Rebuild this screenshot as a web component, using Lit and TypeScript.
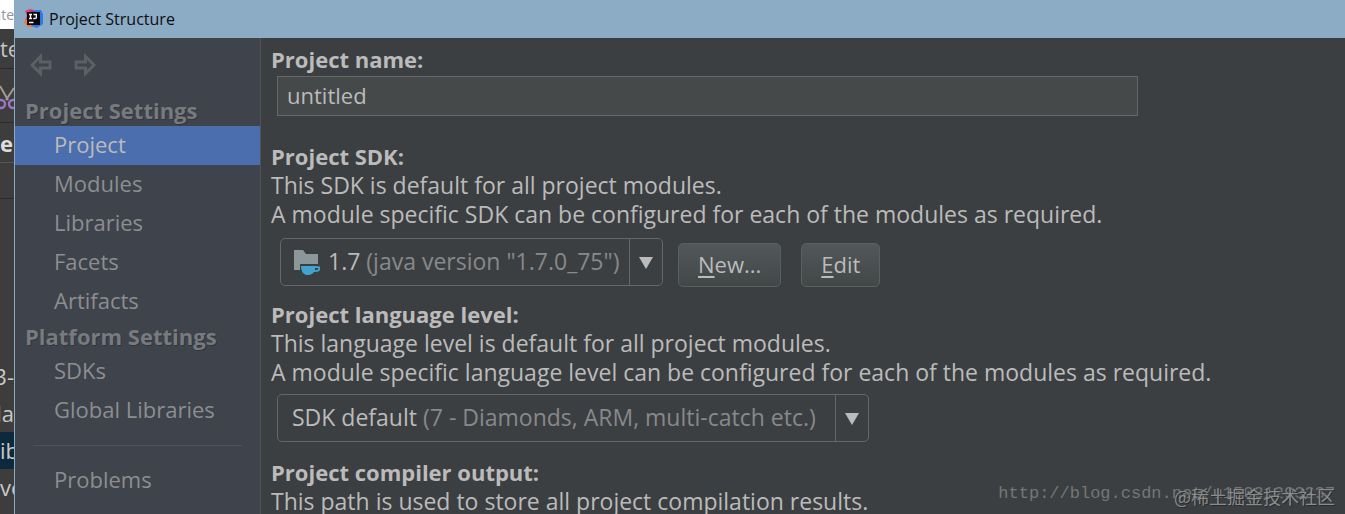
import { LitElement, html, css, svg } from "lit";
import { customElement, property } from "lit/decorators.js";

const ideaLogo = svg`
  <svg class="logo" viewBox="0 0 20 20" aria-hidden="true">
    <path fill="#e8386d" d="M1 2 6 0 12 2 10 9 1 11 3 7Z" />
    <path fill="#f0783c" d="M1 11 0 14 4 18 8 18 8 10Z" />
    <path fill="#8a3fa8" d="M7 1 12 2 12 6 5 6Z" />
    <path fill="#2a7be8" d="M11 1 17 1 19 5 19 15 13 19 7 17 12 12Z" />
    <rect x="3" y="3" width="13" height="13" fill="#0a0708" />
    <path fill="none" stroke="#f4f4f4" stroke-width="1.4" d="M5 5.5H8M6.500 5.500V9.500M5 9.500H8M9.500 5.500H12.300V8.400Q12.300 9.500 11 9.500H9.300M5 13.500H9.500" />
  </svg>`;

const arrowBack = svg`
  <svg class="arrow" viewBox="0 0 24 24" aria-hidden="true">
    <path d="M3 12 11.500 3.500V9H21V15H11.500V20.500Z" />
  </svg>`;

const arrowForward = svg`
  <svg class="arrow" viewBox="0 0 24 24" aria-hidden="true">
    <path d="M21 12 12.500 3.500V9H3V15H12.500V20.500Z" />
  </svg>`;

const jdkIcon = svg`
  <svg class="jdk" viewBox="0 0 28 28" aria-hidden="true">
    <path fill="#8b9799" d="M1 3H10L13 7H25V17H7V23H1Z" />
    <path fill="#3fa5cf" fill-rule="evenodd" d="M8 19H22.500L27 19.500V23Q26 25 21 25Q19 28 16 28H13Q8 26 8 19ZM22 21V23.300Q24.500 23.300 25.200 22V21Z" />
  </svg>`;

@customElement("setting-combo")
class SettingCombo extends LitElement {
  @property() value = "";
  @property() hint = "";
  @property() label = "";
  @property({ type: Boolean }) jdk = false;

  static styles = css`
    :host { display: inline-grid; box-sizing: border-box; grid-template-columns: 1fr 33px; height: 48px; border: 1px solid #646668; border-radius: 5px; color: #bbbbbb; }
    .control { grid-area: 1 / 1 / 2 / 3; width: 100%; height: 100%; margin: 0; padding: 0 0 2px 14px; appearance: none; border: 0; border-radius: 4px; background: transparent; color: inherit; font: inherit; }
    .control.with-icon { padding-left: 47px; }
    .control option { background: #3c3f41; }
    .face { grid-area: 1 / 1; display: flex; align-items: center; padding: 0 0 2px 14px; pointer-events: none; white-space: pre; }
    .face.with-icon { padding-left: 12px; }
    .spacer { visibility: hidden; }
    .hint { color: #88898a; }
    .drop { grid-area: 1 / 2; display: grid; place-items: center; border-left: 1px solid #646668; pointer-events: none; padding-top: 2px; }
    .triangle { width: 14px; height: 12px; fill: #bbbbbb; }
    .jdk { width: 28px; height: 28px; margin-right: 7px; }
  `;

  render() {
    const icon = this.jdk ? "with-icon" : "";
    return html`
      <select class="control ${icon}" aria-label=${this.label}>
        <option>${this.value}</option>
      </select>
      <span class="face ${icon}" aria-hidden="true">${this.jdk ? jdkIcon : ""}<span class="spacer">${this.value} </span><span class="hint">${this.hint}</span></span>
      <span class="drop" aria-hidden="true">
        <svg class="triangle" viewBox="0 0 14 12"><path d="M0 0H14L7 12Z" /></svg>
      </span>`;
  }
}

@customElement("app-root")
class AppRoot extends LitElement {
  static styles = css`
    :host { display: block; height: 100vh; overflow: hidden; background: #3c3f41; color: #bbbbbb; font: 22px/29px "Open Sans", "Noto Sans", sans-serif; }
    .desktop { display: grid; grid-template-columns: 14px 1fr; height: 100%; }
    .behind { overflow: hidden; display: flex; flex-direction: column; white-space: nowrap; background: #3e3d3d; }
    .b-title { flex: none; height: 29px; background: #ffffff; color: #949494; font-size: 14px; }
    .b-menu { flex: none; height: 39px; border-bottom: 1px solid #2b2b2b; color: #c4c4c4; line-height: 38px; }
    .b-tool { flex: none; height: 53px; border-bottom: 1px solid #2b2b2b; }
    .b-tab { flex: none; height: 39px; border-bottom: 1px solid #555555; color: #dddddd; font-weight: 700; line-height: 40px; }
    .b-bar { flex: none; height: 35px; border-bottom: 1px solid #2b2b2b; }
    .b-gap { flex: none; height: 159px; }
    .b-row { flex: none; height: 37px; line-height: 37px; color: #c8c8c8; }
    .b-row.picked { background: #0d293e; }
    .cut { display: flex; justify-content: flex-end; }
    .scissors { display: block; width: 14px; height: 52px; }

    .window { display: flex; flex-direction: column; min-width: 0; border-left: 1px solid #8cabc2; }
    .titlebar { flex: none; display: flex; align-items: center; gap: 5px; height: 38px; padding-left: 9px; background: #8cabc4; color: #0c0f12; }
    .logo { width: 20px; height: 20px; }
    .title { font-size: 16px; font-weight: 400; margin: 0; }
    .body { flex: 1; display: grid; grid-template-columns: 246px 1fr; min-height: 0; }

    .side { background: #3e434c; border-right: 1px solid #515356; color: #8c8e90; overflow: hidden; }
    .history { display: flex; gap: 20px; padding: 15px 14px 19px; }
    .nav-button { display: block; width: 24px; height: 24px; padding: 0; border: 0; background: none; }
    .arrow { display: block; width: 24px; height: 24px; fill: none; stroke: #5c5f64; stroke-width: 3; }
    .group { margin: 0; padding-left: 10px; height: 30px; font-size: 22px; line-height: 28px; font-weight: 700; color: #777a7e; text-shadow: 1px 1px #33363c; }
    .group.second { height: 31px; line-height: 30px; }
    .list { margin: 0; padding: 0; list-style: none; }
    .link { display: block; height: 39px; padding-left: 39px; line-height: 36px; color: inherit; text-decoration: none; }
    .link.active { background: #4b6eaf; color: #bbbbbb; }
    .rule { height: 1px; margin: 15px 18px; border: 0; background: #505459; }

    .main { padding: 7px 10px 0; min-width: 0; white-space: nowrap; overflow: hidden; font-size: 23px; }
    .heading { display: block; margin: 0; font-size: 22px; line-height: 29px; font-weight: 700; }
    .text { margin: 0; }
    .name { display: block; box-sizing: border-box; width: calc(100% - 203px); height: 40px; margin: 2px 0 26px 6px; padding: 0 9px 2px; border: 1px solid #646668; background: #45494a; color: #bbbbbb; font: inherit; font-size: 22px; }
    .row { display: flex; align-items: center; margin: 8px 0 13px 9px; }
    .row.level { margin: 7px 0 16px 6px; }
    .sdk-combo { width: 383px; }
    .level-combo { width: 592px; }
    .button { height: 44px; margin-top: 6px; border: 1px solid #5a6062; border-radius: 5px; background: linear-gradient(#525759, #424748); color: #bbbbbb; font: inherit; font-size: 22px; padding: 0 19px 1px; }
    .new { margin-left: 15px; }
    .edit { margin-left: 20px; }
    .key { text-underline-offset: 3px; }

    .blog, .credit { position: absolute; pointer-events: none; white-space: nowrap; }
    .blog { right: 10px; bottom: 8px; color: #747677; font: 17px/24px "Liberation Mono", monospace; }
    .credit { right: 10px; bottom: 6px; font: 18px/24px "Noto Sans CJK SC", sans-serif; color: #8a8c8d; text-shadow: 1px 1px #292b2c; }
  `;

  private links(names: string[], active = "") {
    return html`<ul class="list">
      ${names.map((n) => html`<li><a class="link ${n === active ? "active" : ""}" href="#">${n}</a></li>`)}
    </ul>`;
  }

  render() {
    return html`
      <div class="desktop">
        <div class="behind" aria-hidden="true">
          <div class="b-title cut">nte</div>
          <div class="b-menu">te</div>
          <div class="b-tool">
            <svg class="scissors" viewBox="0 0 14 52" fill="none">
              <path stroke="#a39b91" stroke-width="2" d="M0 17 8 31M14 19 6 31" />
              <circle cx="1" cy="35" r="4" stroke="#9876c8" stroke-width="2.500" />
              <circle cx="13" cy="35" r="4" stroke="#9876c8" stroke-width="2.500" />
            </svg>
          </div>
          <div class="b-tab">er</div>
          <div class="b-bar"></div>
          <div class="b-gap"></div>
          <div class="b-row cut">3-</div>
          <div class="b-row cut">cla</div>
          <div class="b-row picked">ib</div>
          <div class="b-row">ve</div>
        </div>
        <div class="window">
          <header class="titlebar">${ideaLogo}<h1 class="title">Project Structure</h1></header>
          <div class="body">
            <nav class="side">
              <div class="history">
                <button class="nav-button" aria-label="Back">${arrowBack}</button>
                <button class="nav-button" aria-label="Forward">${arrowForward}</button>
              </div>
              <h2 class="group">Project Settings</h2>
              ${this.links(["Project", "Modules", "Libraries", "Facets", "Artifacts"], "Project")}
              <h2 class="group second">Platform Settings</h2>
              ${this.links(["SDKs", "Global Libraries"])}
              <hr class="rule" />
              ${this.links(["Problems"])}
            </nav>
            <main class="main">
              <label class="heading" for="name">Project name:</label>
              <input class="name" id="name" type="text" .value=${"untitled"} />
              <h2 class="heading">Project SDK:</h2>
              <p class="text">This SDK is default for all project modules.</p>
              <p class="text">A module specific SDK can be configured for each of the modules as required.</p>
              <div class="row">
                <setting-combo class="sdk-combo" jdk label="Project SDK" value="1.7" hint='(java version "1.7.0_75")'></setting-combo>
                <button class="button new"><u class="key">N</u>ew...</button>
                <button class="button edit"><u class="key">E</u>dit</button>
              </div>
              <h2 class="heading">Project language level:</h2>
              <p class="text">This language level is default for all project modules.</p>
              <p class="text">A module specific language level can be configured for each of the modules as required.</p>
              <div class="row level">
                <setting-combo class="level-combo" label="Project language level" value="SDK default" hint="(7 - Diamonds, ARM, multi-catch etc.)"></setting-combo>
              </div>
              <h2 class="heading">Project compiler output:</h2>
              <p class="text">This path is used to store all project compilation results.</p>
            </main>
          </div>
        </div>
      </div>
      <span class="blog">http://blog.csdn.net/u15031293237</span>
      <span class="credit">@稀土掘金技术社区</span>`;
  }
}
